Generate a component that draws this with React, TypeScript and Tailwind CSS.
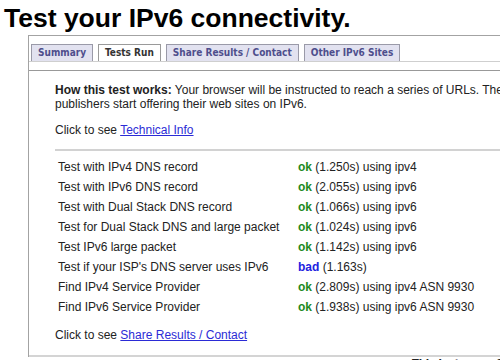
import React from "react";

const tabs = [
  { label: "Summary", active: false },
  { label: "Tests Run", active: true },
  { label: "Share Results / Contact", active: false },
  { label: "Other IPv6 Sites", active: false },
];

const results = [
  { name: "Test with IPv4 DNS record", status: "ok", detail: "(1.250s) using ipv4" },
  { name: "Test with IPv6 DNS record", status: "ok", detail: "(2.055s) using ipv6" },
  { name: "Test with Dual Stack DNS record", status: "ok", detail: "(1.066s) using ipv6" },
  { name: "Test for Dual Stack DNS and large packet", status: "ok", detail: "(1.024s) using ipv6" },
  { name: "Test IPv6 large packet", status: "ok", detail: "(1.142s) using ipv6" },
  { name: "Test if your ISP's DNS server uses IPv6", status: "bad", detail: "(1.163s)" },
  { name: "Find IPv4 Service Provider", status: "ok", detail: "(2.809s) using ipv4 ASN 9930" },
  { name: "Find IPv6 Service Provider", status: "ok", detail: "(1.938s) using ipv6 ASN 9930" },
];

export default function App() {
  return (
    <div className="w-[500px] h-[360px] overflow-hidden bg-white text-[#222] font-['Liberation_Sans',Arial,sans-serif]">
      <div className="w-[900px]">
        <h1 className="pl-[4px] pt-[3px] text-[26.5px] leading-[30px] font-bold text-black">
          Test your IPv6 connectivity.
        </h1>

        <div className="ml-[28px] mt-[2px] border-t border-l border-[#a3a3a3]">
          {/* tab strip */}
          <div className="flex gap-[5px] pl-[2px] pt-[8px] border-b border-[#cfcfcf] font-['DejaVu_Sans_Condensed','DejaVu_Sans',sans-serif] text-[10px] font-bold">
            {tabs.map((t) => (
              <div
                key={t.label}
                className={
                  t.active
                    ? "h-[17px] px-[6px] leading-[15px] border border-b-0 border-[#9a9a9a] bg-white text-[#333]"
                    : "h-[17px] px-[6px] leading-[15px] border border-b-0 border-[#9a9aa8] bg-[#e2e2f0] text-[#4e4e8c]"
                }
              >
                {t.label}
              </div>
            ))}
          </div>

          {/* content */}
          <div className="mt-[8px] border-t border-b-2 border-t-[#999] border-b-[#d4d4d4] pl-[26px] pb-[13px] text-[12px]">
            <p className="mt-[12px] leading-[14px] whitespace-nowrap">
              <b>How this test works:</b> Your browser will be instructed to reach a series of URLs. The specific URLs will help us guess at how well your system will work as more and more
              <br />
              publishers start offering their web sites on IPv6.
            </p>
            <p className="mt-[12px] leading-[14px]">
              Click to see <a className="text-[#2b2bd6] underline">Technical Info</a>
            </p>
            <div className="mt-[12px] h-[2px] bg-[#d2d2d2]" />

            <div className="mt-[6px] pl-[3px]">
              {results.map((r) => (
                <div key={r.name} className="flex h-[20px] items-center whitespace-nowrap">
                  <div className="w-[240px]">{r.name}</div>
                  <div>
                    <span className={r.status === "ok" ? "font-bold text-[#1e8a1e]" : "font-bold text-[#2222e0]"}>
                      {r.status}
                    </span>{" "}
                    {r.detail}
                  </div>
                </div>
              ))}
            </div>

            <p className="mt-[11px] leading-[14px]">
              Click to see <a className="text-[#2b2bd6] underline">Share Results / Contact</a>
            </p>
          </div>
        </div>

        <div className="pl-[412px] text-[11px] leading-[13px] font-bold font-['DejaVu_Sans_Condensed','DejaVu_Sans',sans-serif] text-[#222]">
          This instance of test-ipv6.com is operated by ...
        </div>
      </div>
    </div>
  );
}
